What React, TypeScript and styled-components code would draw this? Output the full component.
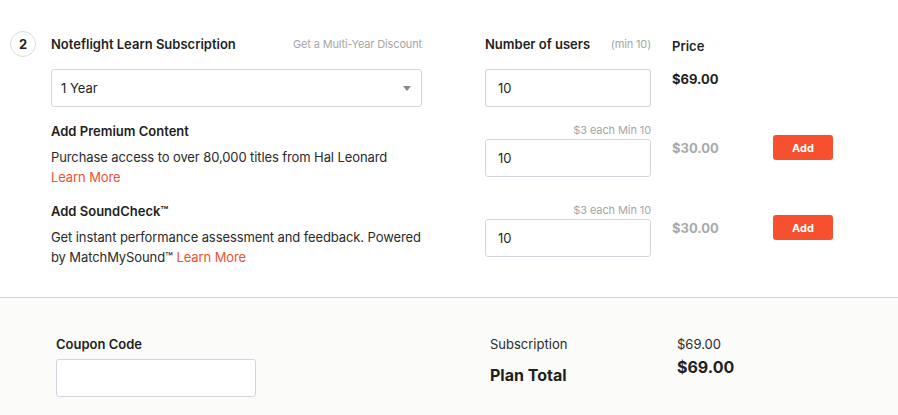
import React from 'react';
import styled, { createGlobalStyle } from 'styled-components';

const GlobalStyle = createGlobalStyle`
	body {
		margin: 0;
		background: #fff;
		font-family: Inter, "Liberation Sans", sans-serif;
		color: #222;
		-webkit-font-smoothing: antialiased;
	}
`;

const ORANGE = '#f5512e';
const BORDER = '#d4d4de';

const Page = styled.div`
	width: 898px;
`;

const Step = styled.section`
	display: flex;
	padding: 30px 0 30px 10px;
	border-bottom: 1px solid ${BORDER};
`;

const Badge = styled.div`
	flex: none;
	width: 26px;
	height: 26px;
	margin-top: 1px;
	margin-right: 15px;
	border: 1px solid #dcdcdc;
	border-radius: 50%;
	box-sizing: border-box;
	display: flex;
	align-items: center;
	justify-content: center;
	font-size: 13px;
	font-weight: 700;
`;

const Body = styled.div`
	display: flex;
	flex-direction: column;
	gap: 14px;
`;

const Row = styled.div`
	display: flex;
	align-items: flex-start;
`;

const Left = styled.div`
	width: 371px;
	margin-right: 63px;
`;

const Users = styled.div`
	width: 166px;
`;

const PriceCell = styled.div<{ $top?: number }>`
	width: 101px;
	margin-left: 21px;
	padding-top: ${(p) => p.$top || 0}px;
`;

const Action = styled.div`
	width: 60px;
	padding-top: 14px;
`;

const Header = styled.div`
	display: flex;
	align-items: center;
	justify-content: space-between;
	height: 26px;
	margin-top: 1px;
	margin-bottom: 12px;
`;

const Title = styled.div<{ $shift?: number }>`
	font-size: 13px;
	font-weight: 600;
	line-height: 20px;
	color: #1f1f1f;
	margin-top: ${(p) => p.$shift || 0}px;
`;

const Hint = styled.span`
	font-size: 11px;
	letter-spacing: -0.15px;
	color: #a6a6a6;
	line-height: 14px;
`;

const HintLine = styled.div`
	text-align: right;
	font-size: 11px;
	letter-spacing: -0.1px;
	color: #a6a6a6;
	line-height: 14px;
	margin-top: 2px;
	margin-bottom: 2px;
`;

const Desc = styled.p`
	margin: 6px 0 0;
	font-size: 13px;
	letter-spacing: -0.1px;
	line-height: 20px;
	color: #2a2a2a;
`;

const Link = styled.a`
	color: ${ORANGE};
	text-decoration: none;
`;

const SelectBox = styled.div`
	height: 38px;
	box-sizing: border-box;
	border: 1px solid ${BORDER};
	border-radius: 3px;
	display: flex;
	align-items: center;
	padding-left: 9px;
	font-size: 13px;
	color: #1f1f1f;
`;

const Caret = styled.span`
	margin-left: auto;
	margin-right: 10px;
	width: 0;
	height: 0;
	border-left: 4.5px solid transparent;
	border-right: 4.5px solid transparent;
	border-top: 5px solid #8a8a8a;
`;

const Input = styled.div<{ $w?: number }>`
	height: 38px;
	box-sizing: border-box;
	border: 1px solid ${BORDER};
	border-radius: 3px;
	background: #fff;
	display: flex;
	align-items: center;
	padding-left: 12px;
	font-size: 13px;
	color: #1f1f1f;
	width: ${(p) => (p.$w ? `${p.$w}px` : 'auto')};
`;

const Price = styled.div<{ $muted?: boolean; $shift?: number }>`
	font-size: 13px;
	font-weight: 700;
	line-height: 20px;
	margin-top: ${(p) => p.$shift || 0}px;
	color: ${(p) => (p.$muted ? '#a9a9a9' : '#1f1f1f')};
`;

const AddButton = styled.button`
	width: 60px;
	height: 25px;
	border: none;
	border-radius: 3px;
	background: ${ORANGE};
	color: #fff;
	font-family: inherit;
	font-size: 11px;
	font-weight: 700;
	padding: 0;
`;

const Summary = styled.section`
	background: #fbfbf9;
	display: flex;
	padding: 36px 0 20px 56px;
`;

const Coupon = styled.div`
	width: 200px;
	margin-right: 234px;
`;

const CouponLabel = styled(Title)`
	margin-bottom: 5px;
`;

const Totals = styled.div`
	display: flex;
`;

const Labels = styled.div`
	width: 187px;
	display: flex;
	flex-direction: column;
`;

const Values = styled.div`
	display: flex;
	flex-direction: column;
`;

const Plain = styled.div`
	font-size: 13px;
	line-height: 20px;
	color: #2a2a2a;
`;

const TotalLabel = styled.div`
	margin-top: 9px;
	font-size: 16px;
	font-weight: 700;
	line-height: 24px;
	color: #1f1f1f;
`;

const TotalValue = styled.div`
	margin-top: 1px;
	font-size: 16px;
	font-weight: 700;
	line-height: 24px;
	color: #1f1f1f;
`;

const addons = [
	{
		title: 'Add Premium Content',
		text: 'Purchase access to over 80,000 titles from Hal Leonard',
		breakLink: true,
	},
	{
		title: 'Add SoundCheck™',
		text: 'Get instant performance assessment and feedback. Powered by MatchMySound™',
		breakLink: false,
	},
];

const App = () => (
	<Page>
		<GlobalStyle />
		<Step>
			<Badge>2</Badge>
			<Body>
				<Row>
					<Left>
						<Header>
							<Title>Noteflight Learn Subscription</Title>
							<Hint>Get a Multi-Year Discount</Hint>
						</Header>
						<SelectBox>
							1 Year
							<Caret />
						</SelectBox>
					</Left>
					<Users>
						<Header>
							<Title>Number of users</Title>
							<Hint>(min 10)</Hint>
						</Header>
						<Input>10</Input>
					</Users>
					<PriceCell>
						<Header>
							<Title $shift={3}>Price</Title>
						</Header>
						<Price $shift={1}>$69.00</Price>
					</PriceCell>
				</Row>

				{ addons.map(({ title, text, breakLink }) => (
					<Row key={title}>
						<Left>
							<Title>{ title }</Title>
							<Desc>
								{ text }
								{ breakLink ? <br /> : ' ' }
								<Link href="#">Learn More</Link>
							</Desc>
						</Left>
						<Users>
							<HintLine>$3 each Min 10</HintLine>
							<Input>10</Input>
						</Users>
						<PriceCell $top={17}>
							<Price $muted>$30.00</Price>
						</PriceCell>
						<Action>
							<AddButton>Add</AddButton>
						</Action>
					</Row>
				)) }
			</Body>
		</Step>

		<Summary>
			<Coupon>
				<CouponLabel>Coupon Code</CouponLabel>
				<Input $w={200} />
			</Coupon>
			<Totals>
				<Labels>
					<Plain>Subscription</Plain>
					<TotalLabel>Plan Total</TotalLabel>
				</Labels>
				<Values>
					<Plain>$69.00</Plain>
					<TotalValue>$69.00</TotalValue>
				</Values>
			</Totals>
		</Summary>
	</Page>
);

export default App;
